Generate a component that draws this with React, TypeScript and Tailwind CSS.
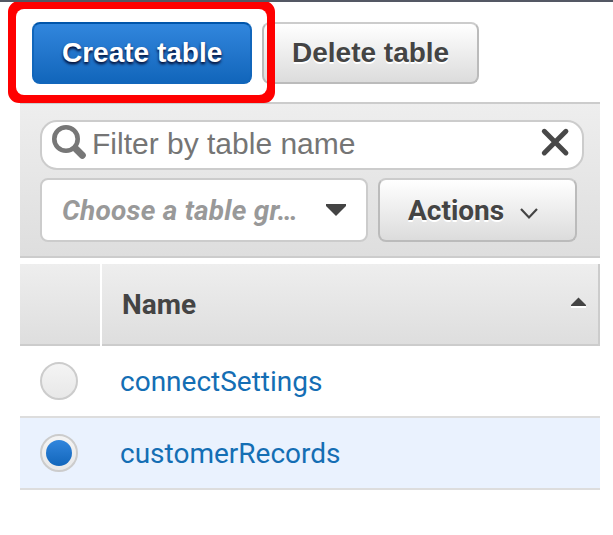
const rows = [
  { name: "connectSettings", selected: false },
  { name: "customerRecords", selected: true },
];

const grayButton =
  "flex shrink-0 items-center rounded-[8px] border-2 border-[#bbb] border-t-[#ccc] bg-linear-to-b from-white to-[#dcdcdc] font-bold text-[#444] [text-shadow:0_2px_0_#fff]";

function Toolbar() {
  return (
    <div className="flex h-[100px] gap-[10px] pt-5 pl-8">
      <div className="relative h-[62px] w-[220px]">
        <button className="flex h-full w-full items-center rounded-[8px] border-2 border-[#1166bb] border-t-[#0055aa] bg-linear-to-b from-[#3186dd] to-[#1166bb] pl-7 text-[28px] font-bold whitespace-nowrap text-white [text-shadow:0_2px_3px_#002] font-['Liberation_Sans',sans-serif]">
          Create table
        </button>
        <div className="pointer-events-none absolute -top-[21px] -left-6 z-10 h-[102px] w-[267px] rounded-[11px] border-8 border-[#ff0000]">
          <div className="h-full w-full rounded-[8px] shadow-[0_0_0_4px_#ff0000]" />
        </div>
      </div>
      <button className={`${grayButton} h-[62px] w-[217px] pl-7 text-[28px] whitespace-nowrap font-['Liberation_Sans',sans-serif]`}>
        Delete table
      </button>
    </div>
  );
}

function Filters() {
  return (
    <div className="flex h-[156px] w-[580px] flex-col gap-2 border-y-2 border-[#ccc] bg-linear-to-b from-[#eee] to-[#dedede] pt-4 pl-5">
      <div className="flex h-[50px] w-[544px] shrink-0 items-start rounded-[17px] border-2 border-[#ccc] bg-white pl-[9px]">
        <svg className="mt-[2px] shrink-0" width="36" height="36" viewBox="0 0 36 36" fill="none" stroke="#777">
          <circle cx="15" cy="15" r="11.7" strokeWidth="4.6" />
          <path d="M24.5 24.5L31.3 31.2" strokeWidth="7" strokeLinecap="round" />
        </svg>
        <span className="mt-[5px] ml-[5px] text-[30px] leading-[34px] text-[#757575] font-['Liberation_Sans',sans-serif]">
          Filter by table name
        </span>
        <svg className="mt-[4px] mr-[11px] ml-auto shrink-0" width="32" height="32" viewBox="0 0 32 32" stroke="#484848" strokeWidth="5" strokeLinecap="round">
          <path d="M5.3 5.3L26.9 26.9M26.9 5.3L5.3 26.9" />
        </svg>
      </div>
      <div className="flex gap-[10px]">
        <div className="flex h-16 w-[328px] items-center rounded-[8px] border-2 border-[#ccc] bg-white pr-5 pl-5">
          <span className="pt-[2px] text-[28px] leading-8 font-bold tracking-[0.23px] whitespace-nowrap text-[#999] italic">Choose a table gr…</span>
          <svg className="ml-auto shrink-0" width="20" height="12" viewBox="0 0 20 12">
            <path d="M0 0H20V2L10 12L0 2Z" fill="#444" />
          </svg>
        </div>
        <button className={`${grayButton} h-16 w-[199px] pl-7 text-[28px]`}>
          <span className="pt-[2px]">Actions</span>
          <svg className="mt-[7px] ml-[15px] shrink-0" width="20" height="14" viewBox="0 0 20 14" fill="none" stroke="#444" strokeWidth="2.2">
            <path d="M2 2L10 10.5L18 2" />
          </svg>
        </button>
      </div>
    </div>
  );
}

function Radio({ selected }: { selected: boolean }) {
  return (
    <span className="flex size-[38px] items-center justify-center rounded-full border-2 border-[#ccc] bg-linear-to-b from-[#f4f4f4] to-[#e8e8e8]">
      {selected && <span className="size-[26px] rounded-full bg-linear-to-b from-[#3186dd] to-[#1166bb]" />}
    </span>
  );
}

export default function App() {
  return (
    <div className="h-[535px] w-[613px] overflow-hidden border-t-2 border-[#545864] bg-white font-['Roboto',sans-serif]">
      <Toolbar />
      <div className="ml-5 w-[580px]">
        <Filters />
        <div className="mt-[6px] flex h-[82px] gap-[2px] text-[28px] font-bold text-[#444]">
          <div className="w-20 border-b-2 border-[#ccc] bg-linear-to-b from-[#eee] to-[#dedede]" />
          <div className="flex flex-1 items-center border-r-2 border-b-2 border-[#ccc] bg-linear-to-b from-[#eee] to-[#dedede] pr-3 pl-5">
            <span className="pt-[2px]">Name</span>
            <svg className="-mt-1 ml-auto" width="15" height="11" viewBox="0 0 15 11">
              <path d="M0 9H15V11H0Z" fill="#fff" />
              <path d="M7.5 0.5L15 8V9H0V8Z" fill="#444" />
            </svg>
          </div>
        </div>
        {rows.map((row) => (
          <div
            key={row.name}
            className={`flex h-[72px] items-center border-b-2 border-[#ddd] pl-5 ${row.selected ? "bg-[#eaf2fe]" : "bg-white"}`}
          >
            <Radio selected={row.selected} />
            <span className="ml-[42px] pt-[2px] text-[28px] text-[#146eb4]">{row.name}</span>
          </div>
        ))}
      </div>
    </div>
  );
}
